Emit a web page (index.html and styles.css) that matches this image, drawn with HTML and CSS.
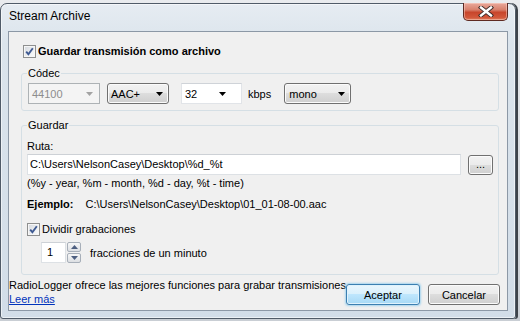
FILE: index.html
```html
<!DOCTYPE html>
<html lang="es">
<head>
    <meta charset="UTF-8">
    <meta name="viewport" content="width=device-width, initial-scale=1.0">
    <title>Stream Archive</title>
    <link rel="stylesheet" href="styles.css">
</head>
<body>
    <div class="window">
        <div class="titlebar">
            <span class="title">Stream Archive</span>
            <button class="close-button" type="button" aria-label="Cerrar">
                <svg width="16" height="11" viewBox="0 0 16 11">
                    <path d="M3 1.5 L13 9.5 M13 1.5 L3 9.5" stroke="#3a2a28" stroke-width="4.2" stroke-linecap="square"/>
                    <path d="M3 1.5 L13 9.5 M13 1.5 L3 9.5" stroke="#ffffff" stroke-width="2.4" stroke-linecap="square"/>
                </svg>
            </button>
        </div>

        <div class="client">
            <div class="content">
                <label class="check check-main">
                    <span class="check-box">
                        <svg width="11" height="11" viewBox="0 0 11 11"><path d="M2.2 5.6 L4.4 8.2 L8.8 2.2" fill="none" stroke="#3f5a92" stroke-width="1.9"/></svg>
                    </span>
                    Guardar transmisión como archivo
                </label>

                <fieldset class="group group-codec">
                    <legend>Códec</legend>
                    <div class="codec-row">
                        <div class="combo combo-disabled combo-rate">
                            <span>44100</span>
                            <svg class="arrow" width="7" height="4" viewBox="0 0 7 4"><path d="M0 0 H7 L3.5 4 Z" fill="#a3a3a3"/></svg>
                        </div>
                        <div class="combo combo-button combo-format">
                            <span>AAC+</span>
                            <svg class="arrow" width="7" height="4" viewBox="0 0 7 4"><path d="M0 0 H7 L3.5 4 Z" fill="#000"/></svg>
                        </div>
                        <div class="combo combo-edit combo-bitrate">
                            <span>32</span>
                            <svg class="arrow" width="7" height="4" viewBox="0 0 7 4"><path d="M0 0 H7 L3.5 4 Z" fill="#000"/></svg>
                        </div>
                        <span class="unit">kbps</span>
                        <div class="combo combo-button combo-channels">
                            <span>mono</span>
                            <svg class="arrow" width="7" height="4" viewBox="0 0 7 4"><path d="M0 0 H7 L3.5 4 Z" fill="#000"/></svg>
                        </div>
                    </div>
                </fieldset>

                <fieldset class="group group-save">
                    <legend>Guardar</legend>
                    <div class="line">Ruta:</div>
                    <div class="path-row">
                        <div class="text-field">C:\Users\NelsonCasey\Desktop\%d_%t</div>
                        <button class="push-button browse-button" type="button">...</button>
                    </div>
                    <div class="line hint">(%y - year, %m - month, %d - day, %t - time)</div>
                    <div class="line example">
                        <b>Ejemplo:</b>
                        <span>C:\Users\NelsonCasey\Desktop\01_01-08-00.aac</span>
                    </div>
                    <label class="check check-split">
                        <span class="check-box">
                            <svg width="11" height="11" viewBox="0 0 11 11"><path d="M2.2 5.6 L4.4 8.2 L8.8 2.2" fill="none" stroke="#3f5a92" stroke-width="1.9"/></svg>
                        </span>
                        Dividir grabaciones
                    </label>
                    <div class="spin-row">
                        <div class="spin-field">1</div>
                        <div class="spin-buttons">
                            <span class="spin-up"><svg width="7" height="4" viewBox="0 0 7 4"><path d="M0 4 H7 L3.5 0 Z" fill="#4d5f80"/></svg></span>
                            <span class="spin-down"><svg width="7" height="4" viewBox="0 0 7 4"><path d="M0 0 H7 L3.5 4 Z" fill="#4d5f80"/></svg></span>
                        </div>
                        <span class="spin-label">fracciones de un minuto</span>
                    </div>
                </fieldset>
            </div>

            <div class="footer">
                <div class="footer-text">
                    <div class="line">RadioLogger ofrece las mejores funciones para grabar transmisiones</div>
                    <a href="#" class="line link">Leer más</a>
                </div>
                <div class="footer-buttons">
                    <button class="push-button default-button" type="button">Aceptar</button>
                    <button class="push-button cancel-button" type="button">Cancelar</button>
                </div>
            </div>
        </div>
    </div>
</body>
</html>
```

FILE: styles.css
```css
* {
    margin: 0;
    padding: 0;
    box-sizing: border-box;
}

body {
    width: 520px;
    height: 321px;
    overflow: hidden;
    font-family: "Liberation Sans", Arial, sans-serif;
    font-size: 11px;
    color: #000;
    background: linear-gradient(to bottom, #e9ebee, #c9ced4);
    padding-top: 3px;
}

.window {
    width: 516px;
    height: 316px;
    border: 1px solid #505b68;
    border-radius: 7px 7px 3px 3px;
    background: linear-gradient(to bottom, #e6ecf2 0, #dbe4ec 40px, #d2dde8 100%);
    box-shadow: inset 0 0 0 1px rgba(255, 255, 255, 0.55), 2px 0 0 #3d434a;
    display: flex;
    flex-direction: column;
}

.titlebar {
    height: 27px;
    display: flex;
    justify-content: space-between;
    align-items: flex-start;
}

.title {
    padding: 5px 0 0 8px;
    font-size: 12px;
    line-height: 15px;
    color: #000;
}

.close-button {
    width: 45px;
    height: 18px;
    margin: -1px 7px 0 0;
    border: 1px solid #5e2a22;
    border-top: none;
    border-radius: 0 0 5px 5px;
    background: linear-gradient(to bottom, #e9a99b 0, #d8806c 40%, #c8452b 55%, #d2573a 85%, #e0805f 100%);
    box-shadow: inset 0 0 0 1px rgba(255, 220, 210, 0.45);
    display: flex;
    align-items: center;
    justify-content: center;
}

.client {
    height: 280px;
    margin: 0 7px;
    border: 1px solid #8c98a6;
    background-color: #f0f0f0;
    display: flex;
    flex-direction: column;
}

.content {
    padding: 13px 8px 0 12px;
}

.line {
    display: block;
    line-height: 14px;
    white-space: nowrap;
}

.check {
    display: flex;
    align-items: center;
    height: 13px;
    line-height: 13px;
    gap: 2px;
}

.check-main {
    margin-left: 2px;
    font-weight: bold;
}

.check-box {
    width: 13px;
    height: 13px;
    border: 1px solid #8e8f8f;
    background: linear-gradient(135deg, #d3d7dd 0, #eef0f2 60%, #fbfbfb 100%);
    box-shadow: inset 0 0 0 1px #f6f6f6;
    display: flex;
    align-items: center;
    justify-content: center;
}

.group {
    border: 1px solid #d5dfe5;
    border-radius: 3px;
}

.group legend {
    line-height: 14px;
    padding: 0 1px;
    margin-left: -1px;
}

.group-codec {
    margin-top: 8px;
    padding: 3px 6px 6px 6px;
}

.codec-row {
    display: flex;
    align-items: center;
}

.combo {
    height: 21px;
    display: flex;
    align-items: center;
    justify-content: space-between;
    padding-left: 3px;
}

.combo-disabled {
    border: 1px solid #adb2b5;
    background-color: #f4f4f4;
    color: #8d8d8d;
    padding-right: 6px;
}

.combo-button {
    border: 1px solid #707070;
    border-radius: 3px;
    background: linear-gradient(to bottom, #f2f2f2 0, #ebebeb 50%, #dddddd 50%, #cfcfcf 100%);
    box-shadow: inset 0 0 0 1px #fbfbfb;
    padding-right: 5px;
}

.combo-edit {
    border: 1px solid #e1e4e8;
    border-top-color: #cfd3d8;
    background-color: #fff;
    padding-right: 15px;
}

.combo-rate {
    width: 72px;
}

.combo-format {
    width: 62px;
    margin-left: 7px;
}

.combo-bitrate {
    width: 61px;
    margin-left: 12px;
}

.unit {
    margin-left: 6px;
}

.combo-channels {
    width: 67px;
    margin-left: 13px;
    padding-left: 4px;
}

.group-save {
    margin-top: 7px;
    padding: 7px 5px 11px 5px;
}

.group-save legend {
    margin-left: 0;
}

.path-row {
    display: flex;
    align-items: flex-start;
    margin-top: 1px;
}

.text-field {
    flex: 1;
    height: 21px;
    border: 1px solid #dde1e5;
    border-top-color: #cdd1d6;
    background-color: #fff;
    padding-left: 2px;
    line-height: 19px;
    white-space: nowrap;
}

.push-button {
    font-family: inherit;
    font-size: 11px;
    color: #000;
    border: 1px solid #707070;
    border-radius: 3px;
    background: linear-gradient(to bottom, #f2f2f2 0, #ebebeb 50%, #dddddd 50%, #cfcfcf 100%);
    box-shadow: inset 0 0 0 1px #fbfbfb;
    cursor: pointer;
}

.browse-button {
    width: 25px;
    height: 20px;
    margin: 1px 0 0 7px;
    line-height: 12px;
    padding-bottom: 2px;
}

.hint {
    margin-top: 1px;
}

.example {
    margin-top: 7px;
}

.example span {
    margin-left: 9px;
}

.check-split {
    margin-top: 12px;
}

.spin-row {
    display: flex;
    align-items: center;
    margin-top: 6px;
}

.spin-field {
    width: 25px;
    height: 21px;
    margin-left: 14px;
    border: 1px solid #dde1e5;
    border-top-color: #cdd1d6;
    background-color: #fff;
    padding-left: 5px;
    line-height: 19px;
}

.spin-buttons {
    width: 14px;
    height: 21px;
    margin-left: 1px;
    display: flex;
    flex-direction: column;
    gap: 1px;
}

.spin-buttons span {
    flex: 1;
    border: 1px solid #a7afb9;
    border-radius: 2px;
    background: linear-gradient(to bottom, #f7f7f7, #dcdfe3);
    display: flex;
    align-items: center;
    justify-content: center;
}

.spin-label {
    margin-left: 9px;
}

.footer {
    display: flex;
    margin-top: 3px;
    padding-right: 10px;
}

.footer-text {
    flex: 0 0 330px;
}

.link {
    color: #0033bb;
    text-decoration: underline;
    width: max-content;
}

.footer-buttons {
    display: flex;
    gap: 8px;
    margin-left: auto;
    margin-top: 6px;
    position: relative;
}

.default-button {
    width: 74px;
    height: 21px;
    border-color: #3c7fb1;
    background: linear-gradient(to bottom, #eaf6fd 0, #d9f0fc 50%, #bee6fd 50%, #a7d9f5 100%);
    box-shadow: inset 0 0 0 1px #dff2fc, 0 0 2px 1px rgba(104, 190, 235, 0.55);
}

.cancel-button {
    width: 72px;
    height: 21px;
}
```
